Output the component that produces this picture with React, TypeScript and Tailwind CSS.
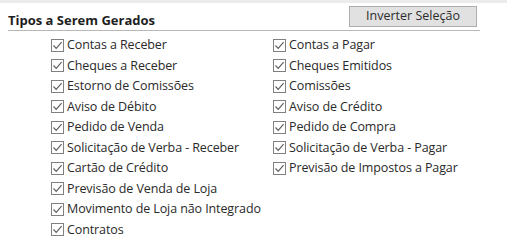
// Tipos a Serem Gerados — a two-column checklist panel with an
// "Inverter Seleção" button in the header strip.

const LEFT_ITEMS = [
  'Contas a Receber',
  'Cheques a Receber',
  'Estorno de Comissões',
  'Aviso de Débito',
  'Pedido de Venda',
  'Solicitação de Verba - Receber',
  'Cartão de Crédito',
  'Previsão de Venda de Loja',
  'Movimento de Loja não Integrado',
  'Contratos',
];

const RIGHT_ITEMS = [
  'Contas a Pagar',
  'Cheques Emitidos',
  'Comissões',
  'Aviso de Crédito',
  'Pedido de Compra',
  'Solicitação de Verba - Pagar',
  'Previsão de Impostos a Pagar',
];

/** Classic flat Windows checkbox, always ticked here. */
function CheckBox() {
  return (
    <span className="flex h-[13px] w-[13px] shrink-0 items-center justify-center border border-[#808080] bg-white">
      <svg width="11" height="11" viewBox="0 0 11 11" fill="none">
        <path d="M1.5 5.5 L4.2 8.3 L9.6 2.2" stroke="#606060" strokeWidth="1.2" />
      </svg>
    </span>
  );
}

function CheckRow({ label }: { label: string }) {
  return (
    <label className="flex h-[20.5px] items-center gap-[3px]">
      <CheckBox />
      <span className="whitespace-nowrap text-[12.5px] leading-none tracking-[-0.1px] text-[#2a2a2a]">
        {label}
      </span>
    </label>
  );
}

export default function App() {
  return (
    <div
      className="h-[252px] w-[507px] overflow-hidden bg-white"
      style={{ fontFamily: '"Open Sans", "Noto Sans", sans-serif' }}
    >
      <div className="h-[3px] bg-[#ececec]" />

      <div className="ml-[8px] flex h-[28px] w-[472px] items-start justify-between border-b border-[#b8b8b8]">
        <h2 className="mt-[10px] text-[13px] font-bold leading-[15px] text-[#1e1e1e]">
          Tipos a Serem Gerados
        </h2>
        <button className="mr-[3px] mt-[3px] h-[21px] w-[128px] border border-[#adadad] bg-[#e1e1e1] text-[12.5px] text-[#2b2b2b]">
          Inverter Seleção
        </button>
      </div>

      <div className="flex pt-[4px]">
        <div className="ml-[51px] flex w-[222px] flex-col">
          {LEFT_ITEMS.map((item) => (
            <CheckRow key={item} label={item} />
          ))}
        </div>
        <div className="flex flex-col">
          {RIGHT_ITEMS.map((item) => (
            <CheckRow key={item} label={item} />
          ))}
        </div>
      </div>
    </div>
  );
}
